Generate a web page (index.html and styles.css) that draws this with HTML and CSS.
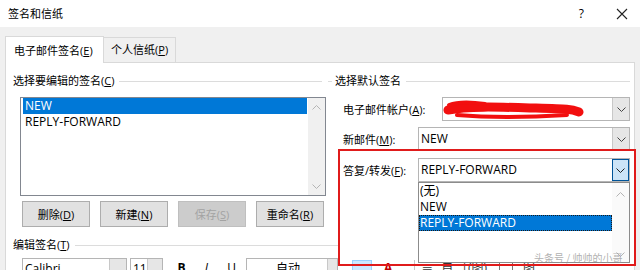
FILE: index.html
```html
<!DOCTYPE html>
<html lang="zh-CN">
<head>
<meta charset="utf-8">
<title>签名和信纸</title>
<link rel="stylesheet" href="styles.css">
</head>
<body>
<div class="dialog">
  <header class="titlebar">
    <span class="title">签名和信纸</span>
    <div class="caption-btns">
      <span class="help">?</span>
      <svg class="close" width="12" height="12" viewBox="0 0 12 12"><path d="M1 1L11 11M11 1L1 11" stroke="#222" stroke-width="1.1" fill="none"/></svg>
    </div>
  </header>

  <nav class="tabstrip">
    <div class="tab active">电子邮件签名(<u>E</u>)</div>
    <div class="tab">个人信纸(<u>P</u>)</div>
  </nav>

  <main class="panel">
    <div class="cols">
      <section class="col-left">
        <div class="ghead"><span class="gtext">选择要编辑的签名(<u>C</u>)</span><span class="gline"></span></div>
        <div class="listbox">
          <ul class="items">
            <li class="sel">NEW</li>
            <li>REPLY-FORWARD</li>
          </ul>
          <div class="vscroll">
            <svg width="9" height="5" viewBox="0 0 9 5"><path d="M0.5 4.5L4.5 0.5L8.5 4.5" stroke="#b4b4b4" fill="none"/></svg>
            <svg width="9" height="5" viewBox="0 0 9 5"><path d="M0.5 0.5L4.5 4.5L8.5 0.5" stroke="#b4b4b4" fill="none"/></svg>
          </div>
        </div>
        <div class="btnrow">
          <button class="btn">删除(<u>D</u>)</button>
          <button class="btn">新建(<u>N</u>)</button>
          <button class="btn disabled">保存(<u>S</u>)</button>
          <button class="btn">重命名(<u>R</u>)</button>
        </div>
      </section>

      <section class="col-right">
        <div class="ghead"><span class="gline lead"></span><span class="gtext">选择默认签名</span><span class="gline"></span></div>
        <div class="field">
          <label>电子邮件帐户(<u>A</u>):</label>
          <div class="combo w1">
            <span class="val"></span>
            <span class="arrow"><svg width="9" height="5" viewBox="0 0 9 5"><path d="M0.5 0.5L4.5 4.5L8.5 0.5" stroke="#444" fill="none"/></svg></span>
            <svg class="scribble" width="150" height="24" viewBox="0 0 150 24">
              <path d="M5 12 C 25 8, 55 9, 90 10 S 128 11, 136 14" stroke="#f20f0f" stroke-width="9" stroke-linecap="round" fill="none"/>
              <path d="M6 7 C 14 4, 28 4, 42 6" stroke="#f20f0f" stroke-width="4" stroke-linecap="round" fill="none"/>
              <path d="M14 17 C 50 20, 90 19, 124 17" stroke="#f20f0f" stroke-width="4" stroke-linecap="round" fill="none"/>
            </svg>
          </div>
        </div>
        <div class="field f2">
          <label>新邮件(<u>M</u>):</label>
          <div class="combo w2">
            <span class="val">NEW</span>
            <span class="arrow"><svg width="9" height="5" viewBox="0 0 9 5"><path d="M0.5 0.5L4.5 4.5L8.5 0.5" stroke="#444" fill="none"/></svg></span>
          </div>
        </div>
        <div class="field f3">
          <label>答复/转发(<u>F</u>):</label>
          <div class="combo w2 focus">
            <span class="val">REPLY-FORWARD</span>
            <span class="arrow"><svg width="9" height="5" viewBox="0 0 9 5"><path d="M0.5 0.5L4.5 4.5L8.5 0.5" stroke="#222" fill="none"/></svg></span>
            <div class="dropdown">
              <ul class="ditems">
                <li>(无)</li>
                <li>NEW</li>
                <li class="sel">REPLY-FORWARD</li>
              </ul>
              <div class="vscroll dscroll">
                <svg width="9" height="5" viewBox="0 0 9 5"><path d="M0.5 4.5L4.5 0.5L8.5 4.5" stroke="#b4b4b4" fill="none"/></svg>
                <svg width="9" height="5" viewBox="0 0 9 5"><path d="M0.5 0.5L4.5 4.5L8.5 0.5" stroke="#b4b4b4" fill="none"/></svg>
              </div>
            </div>
          </div>
        </div>
      </section>
    </div>

    <div class="ghead edit"><span class="gtext">编辑签名(<u>T</u>)</span><span class="gline"></span></div>

    <div class="toolbar">
      <div class="tcombo fontname"><span class="tval">Calibri</span><span class="tarrow"></span></div>
      <div class="tcombo fontsize"><span class="tval">11</span><span class="tarrow"></span></div>
      <span class="tb bold">B</span>
      <span class="tb ital">I</span>
      <span class="tb und">U</span>
      <div class="tcombo color"><span class="tval c">自动</span><span class="tarrow"></span></div>
      <span class="tsel"></span>
      <span class="tred">A</span>
      <span class="tsep2"></span>
      <span class="tb small">≡</span>
      <span class="tb small">自</span>
      <span class="tb small">|(图)</span>
      <span class="tbox"></span>
      <span class="tb small">图</span>
    </div>
  </main>

  <div class="annot"></div>
  <div class="watermark">头条号 / 帅帅的小哥</div>
</div>
</body>
</html>
```

FILE: styles.css
```css
* { box-sizing: border-box; }
html, body { margin: 0; padding: 0; }
body {
  width: 640px;
  height: 270px;
  overflow: hidden;
  background: #f0f0f0;
  font-family: "Open Sans", "Noto Sans CJK SC", sans-serif;
  font-size: 11px;
  color: #000;
}
u { text-decoration: underline; text-underline-offset: 1px; }
ul { list-style: none; margin: 0; padding: 0; }

.dialog { position: relative; width: 640px; height: 270px; }

/* title bar */
.titlebar {
  height: 27px;
  background: #fff;
  display: flex;
  align-items: center;
  justify-content: space-between;
  padding: 0 12px 0 8px;
}
.title { font-size: 11px; line-height: 16px; }
.caption-btns { display: flex; align-items: center; gap: 32px; }
.help { font-size: 12px; line-height: 14px; }
.close { display: block; }

/* tabs */
.tabstrip {
  height: 35px;
  display: flex;
  align-items: flex-end;
  padding-left: 5px;
}
.tab {
  height: 25px;
  line-height: 24px;
  padding: 0 7px;
  border: 1px solid #d9d9d9;
  border-bottom: none;
  background: #f0f0f0;
  white-space: nowrap;
}
.tab.active {
  height: 27px;
  line-height: 28px;
  width: 99px;
  padding: 0 6px 0 8px;
  background: #fff;
  position: relative;
  z-index: 1;
  margin-bottom: -1px;
}
.tab:not(.active) { border-left: none; }

/* panel */
.panel {
  margin: 0 5px;
  height: 208px;
  background: #fff;
  border: 1px solid #d9d9d9;
  border-bottom: none;
}
.cols {
  display: grid;
  grid-template-columns: 322px 1fr;
  align-items: start;
}

.ghead {
  display: flex;
  align-items: center;
  height: 16px;
  line-height: 16px;
}
.gtext { white-space: nowrap; }
.gline { flex: 1; height: 1px; background: #dcdcdc; margin-left: 5px; }
.gline.lead { flex: 0 0 4px; margin: 0 3px 0 0; }

.col-left { padding: 10px 0 0 7px; }
.col-left .ghead { margin-right: 6px; }

.listbox {
  margin: 8px 0 0 7px;
  width: 306px;
  height: 99px;
  border: 1px solid #828790;
  display: flex;
}
.items { flex: 1; padding: 0 1px 0 2px; }
.items li, .ditems li {
  height: 16px;
  line-height: 16px;
  font-size: 12px;
  padding-left: 2px;
  white-space: nowrap;
}
.items li.sel, .ditems li.sel { background: #0078d7; color: #fff; }

.vscroll {
  width: 17px;
  background: #f0f0f0;
  display: flex;
  flex-direction: column;
  justify-content: space-between;
  align-items: center;
  padding: 7px 0 6px;
}
.vscroll svg { display: block; }

.btnrow {
  margin: 5px 0 0 9px;
  display: flex;
  gap: 10px;
}
.btn {
  width: 68px;
  height: 26px;
  padding: 0;
  background: #e1e1e1;
  border: 1px solid #adadad;
  font: inherit;
  color: #000;
}
.btn.disabled { background: #cccccc; border-color: #bfbfbf; color: #a3a3a3; }

.col-right { padding: 10px 4px 0 0; }
.field {
  margin-left: 15px;
  margin-top: 8px;
  height: 24px;
  display: flex;
  align-items: center;
  justify-content: space-between;
}
.field.f2 { margin-top: 6px; }
.field.f3 { margin-top: 7px; }
.field label { white-space: nowrap; }

.combo {
  position: relative;
  height: 24px;
  border: 1px solid #b5b5b5;
  background: #fff;
  display: flex;
  align-items: stretch;
}
.combo.w1 { width: 188px; }
.combo.w2 { width: 212px; }
.combo .val {
  flex: 1;
  font-size: 12px;
  line-height: 22px;
  padding-left: 2px;
  white-space: nowrap;
}
.combo .arrow {
  width: 17px;
  background: #e6e6e6;
  border-left: 1px solid #c8c8c8;
  display: flex;
  align-items: center;
  justify-content: center;
}
.combo.focus .arrow {
  background: #cce4f7;
  border: 1px solid #005499;
}
.scribble { position: absolute; left: 0; top: 0; pointer-events: none; }

.dropdown {
  position: absolute;
  left: -1px;
  top: 23px;
  width: 212px;
  height: 81px;
  background: #fff;
  border: 1px solid #8c8c8c;
  display: flex;
  z-index: 2;
}
.ditems { flex: 1; padding-top: 0; }
.ditems li { height: 16px; line-height: 16px; padding-left: 1px; }
.ditems li.sel { outline: 1px dotted #1a1a1a; outline-offset: -1px; }
.dscroll { background: #fafafa; padding: 9px 0 5px; }

.ghead.edit { width: 332px; padding-left: 7px; margin-top: 10px; }

.toolbar {
  margin: 5px 0 0 16px;
  display: flex;
  align-items: flex-start;
  height: 22px;
}
.tcombo {
  height: 22px;
  border: 1px solid #b5b5b5;
  display: flex;
  background: #fff;
}
.tcombo .tval { flex: 1; padding-left: 2px; font-size: 12px; line-height: 20px; white-space: nowrap; overflow: hidden; }
.tcombo .tval.c { text-align: center; }
.tcombo .tarrow { width: 17px; background: #e6e6e6; border-left: 1px solid #c8c8c8; }
.fontname { width: 105px; }
.fontsize { width: 33px; margin-left: 3px; }
.fontsize .tarrow { width: 15px; }
.tb { font-size: 12px; line-height: 20px; width: 25px; text-align: center; }
.bold { font-weight: bold; margin-left: 6px; }
.ital { font-style: italic; }
.und { text-decoration: underline; }
.color { width: 92px; margin-left: 2px; }
.color .tarrow { width: 10px; }
.tsel { width: 20px; height: 16px; margin: 2px 0 0 14px; background: #cce8ff; border: 1px solid #99d1ff; }
.tred { color: #c00000; font-size: 12px; line-height: 20px; margin-left: 12px; font-weight: bold; }
.tsep2 { width: 1px; height: 18px; background: #c8c8c8; margin: 2px 6px 0 22px; }
.tb.small { width: auto; margin-right: 8px; color: #333; }
.tbox { width: 14px; height: 14px; border: 1px solid #777; margin: 3px 10px 0 4px; }

/* annotation overlays */
.annot {
  position: absolute;
  left: 338px;
  top: 149px;
  width: 298px;
  height: 117px;
  border: 2px solid #e01b1b;
  z-index: 5;
  pointer-events: none;
}
.watermark {
  position: absolute;
  left: 534px;
  top: 251px;
  font-family: "Noto Sans CJK SC", sans-serif;
  font-size: 10px;
  line-height: 14px;
  color: rgba(150, 150, 150, 0.75);
  z-index: 6;
  white-space: nowrap;
}
```
